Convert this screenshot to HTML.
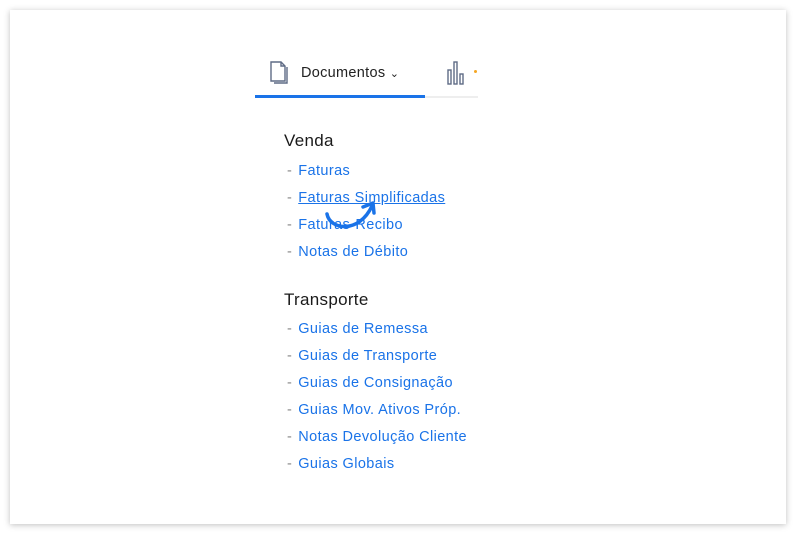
<!DOCTYPE html>
<html><head><style>
body{margin:0;width:800px;height:539px;background:#fff;font-family:"Liberation Sans",sans-serif;position:relative;overflow:hidden}
.card{position:absolute;left:10px;top:10px;width:776px;height:514px;background:#fff;box-shadow:0 1px 6px rgba(0,0,0,.25)}
.t{position:absolute;white-space:nowrap}
.h{font-size:17px;color:#1a1a1a;left:284px;letter-spacing:0.3px}
.l{font-size:14.5px;color:#1a73e8;left:287px;letter-spacing:0.4px}
.l span{color:#888;margin-right:6px}
</style></head><body>
<div class="card"></div>
<svg class="t" style="left:268px;top:60px" width="24" height="26" viewBox="0 0 24 26" fill="none" stroke="#5f6b85" stroke-width="1.4"><path d="M3 2h10l4 4v15H3z"/><path d="M13 2v4h4"/><path d="M19 7v16H6"/></svg>
<div class="t" style="left:301px;top:65px;font-size:14.5px;color:#222;letter-spacing:0.3px">Documentos <span style="font-size:11px">&#8964;</span></div>
<svg class="t" style="left:446px;top:60px" width="20" height="26" viewBox="0 0 20 26" fill="none" stroke="#5f6b85" stroke-width="1.4"><rect x="2" y="10" width="3" height="14"/><rect x="8" y="2" width="3" height="22"/><rect x="14" y="14" width="3" height="10"/></svg>
<div class="t" style="left:474px;top:70px;width:3px;height:3px;background:#f5a623;border-radius:2px"></div>
<div class="t" style="left:255px;top:95px;width:170px;height:3px;background:#1a73e8"></div>
<div class="t" style="left:425px;top:96px;width:53px;height:2px;background:#eee"></div>
<div class="t h" style="top:131px">Venda</div>
<div class="t l" style="top:163px"><span>-</span>Faturas</div>
<div class="t l" style="top:190px"><span>-</span><u>Faturas Simplificadas</u></div>
<div class="t l" style="top:217px"><span>-</span>Faturas-Recibo</div>
<div class="t l" style="top:244px"><span>-</span>Notas de Débito</div>
<div class="t h" style="top:290px">Transporte</div>
<div class="t l" style="top:321px"><span>-</span>Guias de Remessa</div>
<div class="t l" style="top:348px"><span>-</span>Guias de Transporte</div>
<div class="t l" style="top:375px"><span>-</span>Guias de Consignação</div>
<div class="t l" style="top:402px"><span>-</span>Guias Mov. Ativos Próp.</div>
<div class="t l" style="top:429px"><span>-</span>Notas Devolução Cliente</div>
<div class="t l" style="top:456px"><span>-</span>Guias Globais</div>
<svg class="t" style="left:320px;top:198px" width="60" height="42" viewBox="0 0 60 42" fill="none" stroke="#1a73e8" stroke-width="3.5" stroke-linecap="round" stroke-linejoin="round"><path d="M7 16c3 16 32 20 45 -8"/><path d="M43 9l10 -4l1 10"/></svg>
</body></html>
